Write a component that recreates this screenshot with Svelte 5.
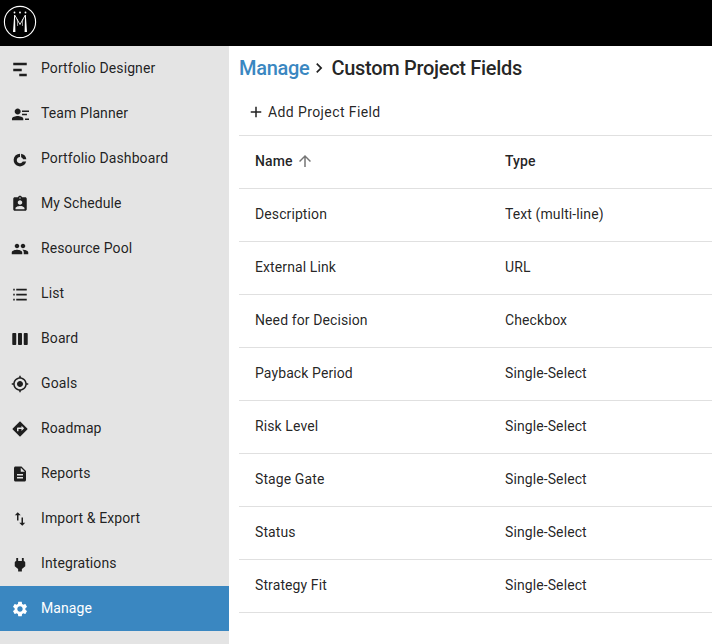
<script lang="ts">
  const nav = [
    { label: 'Portfolio Designer', icon: 'designer' },
    { label: 'Team Planner', icon: 'team' },
    { label: 'Portfolio Dashboard', icon: 'donut' },
    { label: 'My Schedule', icon: 'schedule' },
    { label: 'Resource Pool', icon: 'people' },
    { label: 'List', icon: 'list' },
    { label: 'Board', icon: 'board' },
    { label: 'Goals', icon: 'goals' },
    { label: 'Roadmap', icon: 'roadmap' },
    { label: 'Reports', icon: 'reports' },
    { label: 'Import & Export', icon: 'import' },
    { label: 'Integrations', icon: 'plug' },
    { label: 'Manage', icon: 'gear', active: true }
  ];

  const icons: Record<string, string> = {
    designer: 'M3 3.7h18v3.4H3zM3 11.7h11.3v3.4H3zM11 18.4h10v3.4H11z',
    team: 'M8.9 12.7c2.2 0 4-1.8 4-4s-1.8-4-4-4-4 1.8-4 4 1.8 4 4 4zm0 2c-2.7 0-7.6 1.3-7.6 3.6v2.1h15.1v-2.1c0-2.3-4.8-3.6-7.5-3.6zM14.7 7.4H24v1.8h-9.3zM14.7 11.8h6.6v1.8h-6.6zM18.7 18.1H24v1.8h-5.3z',
    donut: 'M12 4.900A8.500 8.500 0 1 0 20.260 15.400H15.690A4.200 4.200 0 1 1 12 9.200ZM13.500 5A8.500 8.500 0 0 1 20.440 12.400H16.080A4.200 4.200 0 0 0 13.500 9.500Z',
    schedule: 'M19 3h-4.18C14.4 1.84 13.3 1 12 1c-1.3 0-2.4.84-2.82 2H5c-1.1 0-2 .9-2 2v14c0 1.1.9 2 2 2h14c1.1 0 2-.9 2-2V5c0-1.1-.9-2-2-2zm-7 0c.55 0 1 .45 1 1s-.45 1-1 1-1-.45-1-1 .45-1 1-1zm0 4c1.66 0 3 1.34 3 3s-1.34 3-3 3-3-1.34-3-3 1.34-3 3-3zm6 12H6v-1.4c0-2 4-3.1 6-3.1s6 1.1 6 3.1V19z',
    people: 'M16 11c1.66 0 2.99-1.34 2.99-3S17.66 5 16 5c-1.66 0-3 1.34-3 3s1.34 3 3 3zm-8 0c1.66 0 2.99-1.34 2.99-3S9.66 5 8 5C6.34 5 5 6.34 5 8s1.34 3 3 3zm0 2c-2.33 0-7 1.17-7 3.5V19h14v-2.5c0-2.33-4.67-3.5-7-3.5zm8 0c-.29 0-.62.02-.97.05 1.16.84 1.97 1.97 1.97 3.45V19h6v-2.5c0-2.33-4.67-3.5-7-3.5z',
    list: 'M3 5h2v2.300H3zM7 5h14v2.300H7zM3 11.600h2v2.300H3zM7 11.600h14v2.300H7zM3 18.200h2v2.300H3zM7 18.200h14v2.300H7z',
    board: 'M6 4H2.7c-.55 0-1 .45-1 1v14c0 .55.45 1 1 1H6c.55 0 1-.45 1-1V5c0-.55-.45-1-1-1zm15.3 0H18c-.55 0-1 .45-1 1v14c0 .55.45 1 1 1h3.300c.55 0 1-.45 1-1V5c0-.55-.45-1-1-1zm-7.650 0h-3.300c-.55 0-1 .45-1 1v14c0 .55.45 1 1 1h3.300c.55 0 1-.45 1-1V5c0-.55-.45-1-1-1z',
    goals: 'M12 8c-2.21 0-4 1.79-4 4s1.79 4 4 4 4-1.79 4-4-1.79-4-4-4zm8.94 3c-.46-4.17-3.77-7.48-7.94-7.94V1h-2v2.06C6.83 3.52 3.52 6.83 3.06 11H1v2h2.06c.46 4.17 3.77 7.48 7.94 7.94V23h2v-2.06c4.17-.46 7.48-3.77 7.94-7.94H23v-2h-2.06zM12 19c-3.87 0-7-3.13-7-7s3.13-7 7-7 7 3.13 7 7-3.13 7-7 7z',
    roadmap: 'M21.71 11.29l-9-9c-.39-.39-1.02-.39-1.41 0l-9 9c-.39.39-.39 1.02 0 1.41l9 9c.39.39 1.02.39 1.41 0l9-9c.39-.38.39-1.01 0-1.41zM14 14.5V12h-4v3H8v-4c0-.55.45-1 1-1h5V7.5l3.5 3.5-3.5 3.5z',
    reports: 'M14 2H6c-1.1 0-1.99.9-1.99 2L4 20c0 1.1.89 2 1.99 2H18c1.1 0 2-.9 2-2V8l-6-6zm2 16H8v-2h8v2zm0-4H8v-2h8v2zm-3-5V3.5L18.5 9H13z',
    import: 'M9 3L5 6.99h3V14h2V6.99h3L9 3zm7 14.01V10h-2v7.01h-3L15 21l4-3.99h-3z',
    plug: 'M17 8V4h-2.500v4h-5V4H7v4C6 8 5 9 5 10v5l4.500 3.500V22h5v-3.500L19 15v-5c0-1-1-2-2-2z',
    gear: 'M19.14 12.94c.04-.3.06-.61.06-.94 0-.32-.02-.64-.07-.94l2.03-1.58c.18-.14.23-.41.12-.61l-1.92-3.32c-.12-.22-.37-.29-.59-.22l-2.39.96c-.5-.38-1.03-.7-1.62-.94l-.36-2.54c-.04-.24-.24-.41-.48-.41h-3.84c-.24 0-.43.17-.47.41l-.36 2.54c-.59.24-1.13.57-1.62.94l-2.39-.96c-.22-.08-.47 0-.59.22L2.74 8.87c-.12.21-.08.47.12.61l2.03 1.58c-.05.3-.09.63-.09.94s.02.64.07.94l-2.03 1.58c-.18.14-.23.41-.12.61l1.92 3.32c.12.22.37.29.59.22l2.39-.96c.5.38 1.03.7 1.62.94l.36 2.54c.05.24.24.41.48.41h3.84c.24 0 .44-.17.47-.41l.36-2.54c.59-.24 1.13-.56 1.62-.94l2.39.96c.22.08.47 0 .59-.22l1.92-3.32c.12-.22.07-.47-.12-.61l-2.01-1.58zM12 15.6c-1.98 0-3.6-1.62-3.6-3.6s1.62-3.6 3.6-3.6 3.6 1.62 3.6 3.6-1.62 3.6-3.6 3.6z'
  };

  const fields = [
    { name: 'Description', type: 'Text (multi-line)' },
    { name: 'External Link', type: 'URL' },
    { name: 'Need for Decision', type: 'Checkbox' },
    { name: 'Payback Period', type: 'Single-Select' },
    { name: 'Risk Level', type: 'Single-Select' },
    { name: 'Stage Gate', type: 'Single-Select' },
    { name: 'Status', type: 'Single-Select' },
    { name: 'Strategy Fit', type: 'Single-Select' }
  ];
</script>

<div class="page">
  <header class="topbar">
    <svg class="logo" viewBox="0 0 34 34" width="34" height="34">
      <circle cx="17" cy="17" r="15.6" fill="none" stroke="#fff" stroke-width="1.1" />
      <path d="M11.200 10 L12 10 L12.400 27 L10 27 Z M22.800 10 L22 10 L21.600 27 L24 27 Z" fill="#fff" />
      <path d="M11.700 10 L17 19.500 L22.300 10" fill="none" stroke="#fff" stroke-width="0.900" />
      <path d="M14.300 14 L14.600 21 M19.700 14 L19.400 21" fill="none" stroke="#fff" stroke-width="0.600" />
      <circle cx="11.500" cy="7.500" r="0.900" fill="#fff" />
      <circle cx="17" cy="7.500" r="0.900" fill="#fff" />
      <circle cx="22.500" cy="7.500" r="0.900" fill="#fff" />
    </svg>
  </header>

  <div class="body">
    <nav class="sidebar">
      {#each nav as item}
        <div class="nav-item" class:active={item.active}>
          <svg class="nav-icon" viewBox="0 0 24 24" width="18" height="18">
            <path d={icons[item.icon]} fill="currentColor" />
          </svg>
          <span>{item.label}</span>
        </div>
      {/each}
    </nav>

    <main class="content">
      <h1 class="crumbs">
        <span class="crumb-link">Manage</span>
        <svg viewBox="0 0 24 24" width="20" height="20"><path d="M10 6L8.590 7.410 13.170 12l-4.580 4.590L10 18l6-6z" fill="currentColor" /></svg>
        <span class="crumb-current">Custom Project Fields</span>
      </h1>

      <div class="toolbar">
        <button class="add">
          <svg viewBox="0 0 24 24" width="18" height="18"><path d="M19 13h-6v6h-2v-6H5v-2h6V5h2v6h6v2z" fill="currentColor" /></svg>
          <span>Add Project Field</span>
        </button>
      </div>

      <table>
        <thead>
          <tr>
            <th class="name-col">
              <span class="sort">Name
                <svg viewBox="0 0 24 24" width="18" height="18"><path d="M4 12l1.410 1.410L11 7.830V20h2V7.830l5.580 5.590L20 12l-8-8-8 8z" fill="currentColor" /></svg>
              </span>
            </th>
            <th>Type</th>
          </tr>
        </thead>
        <tbody>
          {#each fields as field}
            <tr>
              <td>{field.name}</td>
              <td>{field.type}</td>
            </tr>
          {/each}
        </tbody>
      </table>
    </main>
  </div>
</div>

<style>
  :global(body) {
    margin: 0;
    background: #fff;
  }

  .page {
    width: 712px;
    height: 644px;
    overflow: hidden;
    font-family: Roboto, sans-serif;
    font-size: 14px;
    color: rgba(0, 0, 0, 0.87);
  }

  .topbar {
    height: 44px;
    background: #000;
    display: flex;
    align-items: center;
    padding: 0 0 2px 3px;
  }

  .logo {
    display: block;
  }

  .body {
    display: flex;
    height: 598px;
  }

  .sidebar {
    width: 229px;
    flex: none;
    background: #e4e4e4;
  }

  .nav-item {
    height: 45px;
    display: flex;
    align-items: center;
    gap: 12px;
    padding-left: 11px;
    letter-spacing: 0.1px;
  }

  .nav-item span {
    margin-bottom: 2px;
  }

  .nav-icon {
    flex: none;
  }

  .nav-item.active {
    background: #3a87c1;
    color: #fff;
  }

  .content {
    flex: 1;
    padding-left: 10px;
    min-width: 0;
  }

  .crumbs {
    margin: 0;
    height: 44px;
    display: flex;
    align-items: center;
    font-size: 20px;
    font-weight: 500;
    letter-spacing: -0.3px;
  }

  .crumb-link {
    color: #3a87c1;
  }

  .crumb-current {
    margin-left: 2px;
  }

  .toolbar {
    height: 43px;
    padding-bottom: 2px;
    display: flex;
    align-items: center;
  }

  .add {
    display: flex;
    align-items: center;
    gap: 3px;
    padding: 0 8px;
    background: none;
    border: 0;
    font: inherit;
    font-size: 14px;
    letter-spacing: 0.4px;
    color: rgba(0, 0, 0, 0.87);
  }

  table {
    width: 100%;
    border-collapse: collapse;
    border-top: 1px solid #e0e0e0;
  }

  th,
  td {
    height: 50px;
    padding: 0 16px 2px;
    text-align: left;
    border-bottom: 1px solid #e0e0e0;
    font-size: 14px;
    letter-spacing: 0.1px;
    box-sizing: content-box;
  }

  th {
    font-weight: 500;
  }

  .name-col {
    width: 218px;
  }

  .sort {
    display: inline-flex;
    align-items: center;
    gap: 3px;
  }

  .sort svg {
    color: #757575;
  }
</style>
